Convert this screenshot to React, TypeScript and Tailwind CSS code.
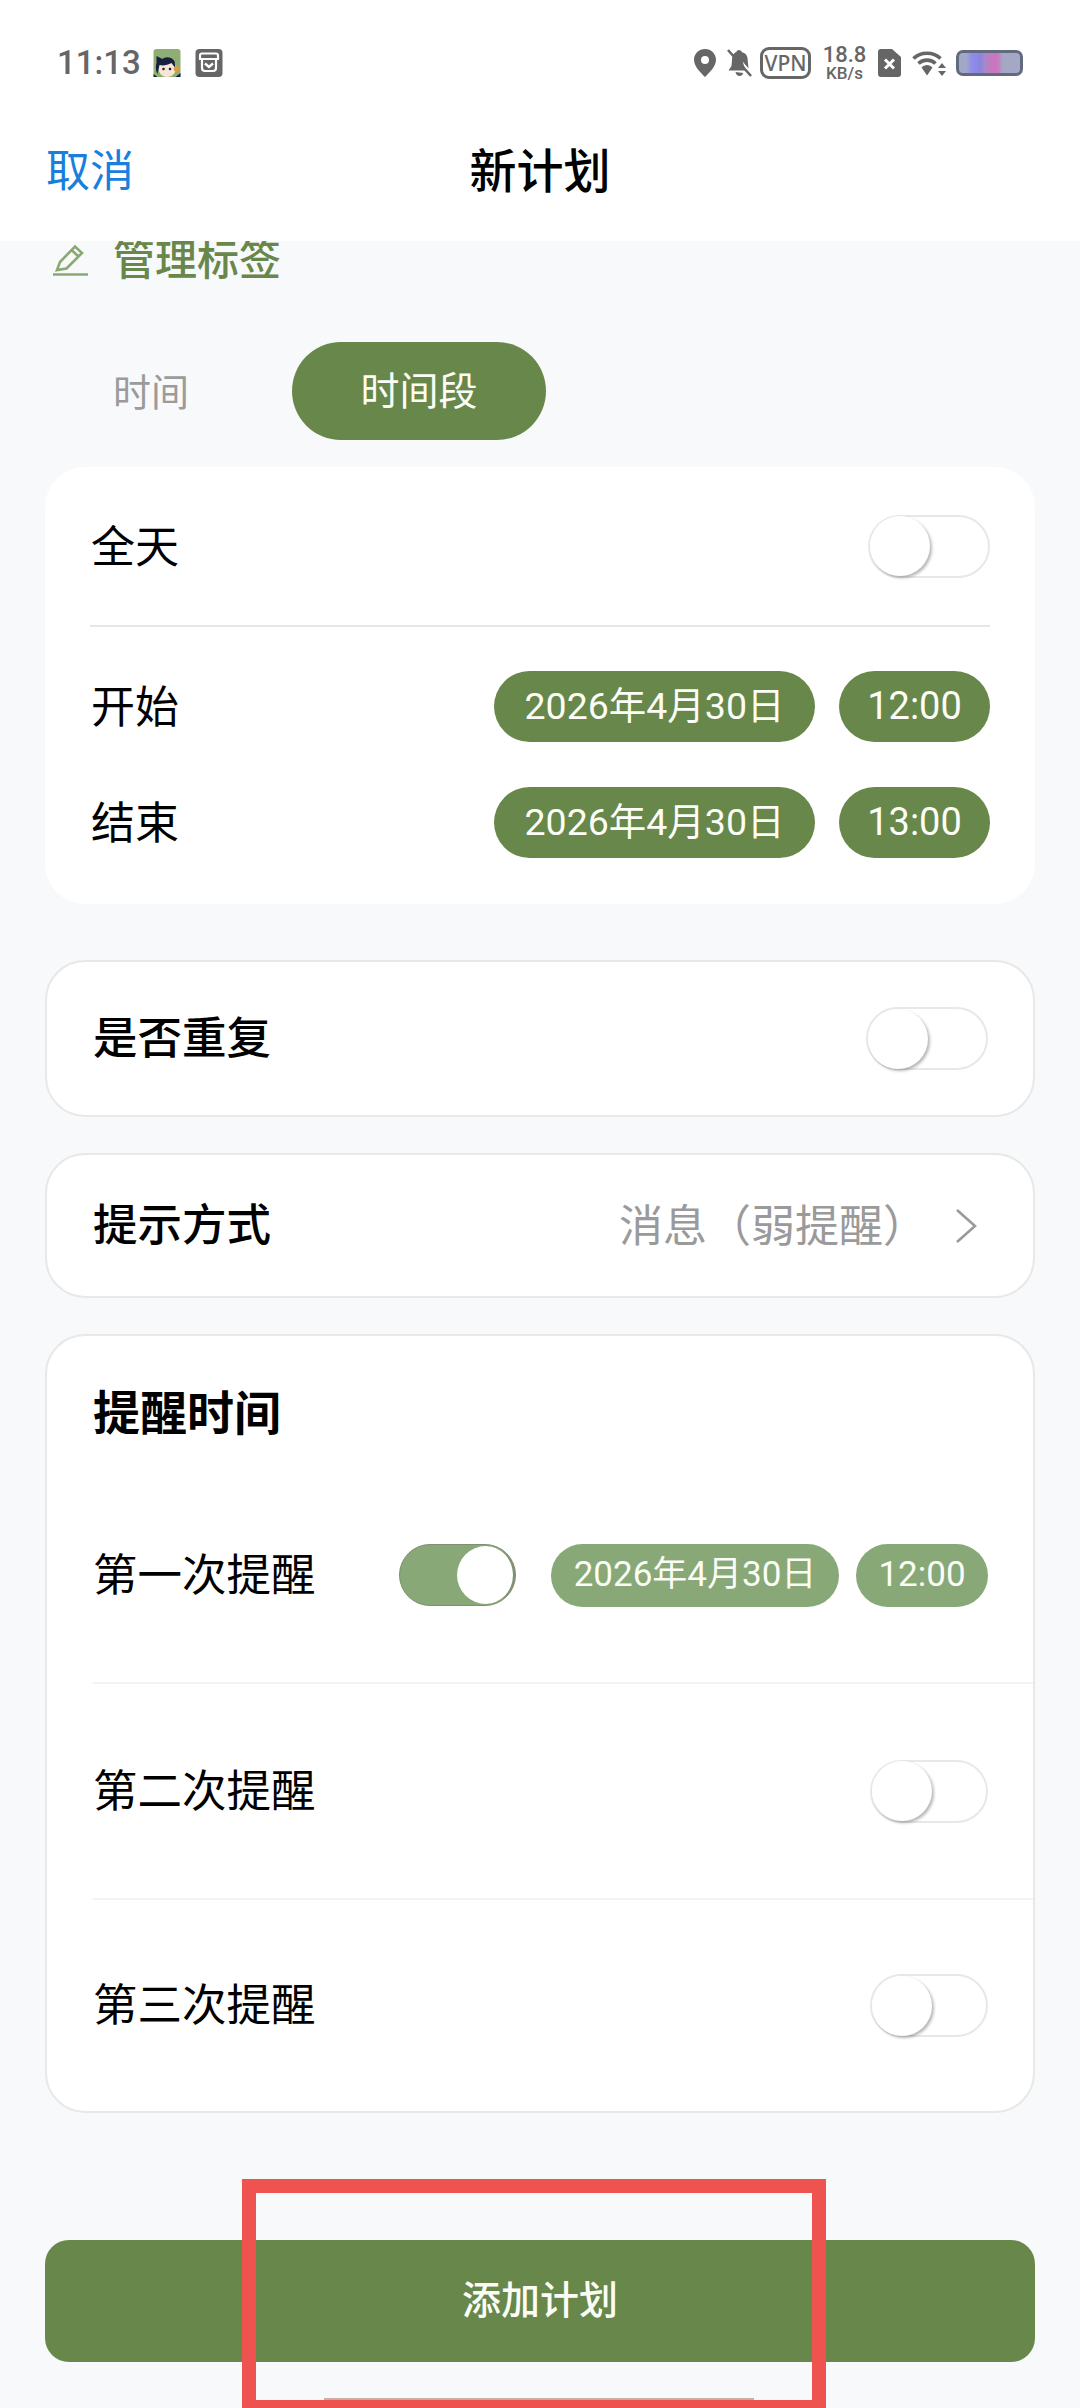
const FONT = 'font-["Roboto","Noto_Sans_CJK_SC",sans-serif]';

function Toggle({ on = false, small = false }: { on?: boolean; small?: boolean }) {
  if (on) {
    return (
      <div className="flex justify-end items-center w-[117px] h-[62px] rounded-full bg-[#88a877] border border-[#7f8f72]">
        <div className="w-[58px] h-[58px] rounded-full bg-white border-r-2 border-[#7f8f72]" />
      </div>
    );
  }
  return (
    <div className={`flex items-center h-[63px] rounded-full bg-white border-2 border-[#e8e8e8] ${small ? 'w-[118px]' : 'w-[122px]'}`}>
      <div className="w-[60px] h-[60px] rounded-full bg-white shadow-[2px_2px_3px_rgba(0,0,0,0.28)]" />
    </div>
  );
}

function Pill({ children, light = false, w, text }: { children: string; light?: boolean; w: string; text?: string }) {
  return (
    <div className={`flex items-center justify-center rounded-full text-[#fbfdf6] ${light ? 'bg-[#88a877] h-[63px] text-[35px]' : `bg-[#68874a] h-[71px] ${text ?? 'text-[37.5px]'}`} ${w}`}>
      {children}
    </div>
  );
}

function StatusIcons() {
  return (
    <div className="flex items-center text-[#666666]">
      {/* location */}
      <svg width="22" height="28" viewBox="0 0 22 28">
        <path fill="#666" fillRule="evenodd" d="M11 0C5 0 0 4.700 0 10.700 0 17.500 7 24 11 28c4-4 11-10.500 11-17.300C22 4.700 17 0 11 0zm0 7a4 4 0 1 1 0 8 4 4 0 0 1 0-8z" />
      </svg>
      {/* muted bell */}
      <svg className="ml-[11px]" width="25" height="28" viewBox="0 0 25 28">
        <path fill="#666" d="M12 1c-1.500 0-2.400 1-2.600 2.300C6.800 4 5.500 6 5.200 8.500L4.500 17 1.500 21.500H18.500ZM8.500 23c.5 2.500 2 4 4 4s3.200-1.200 3.800-3zM8 3.500 21.500 19.500 20.500 9c-.4-3-2.300-5-5.500-5.700C14.700 2 13.500 1 12 1Z" />
        <path stroke="#666" strokeWidth="2.600" d="M1 1 24 27" />
      </svg>
      <div className="ml-[8px] flex items-center justify-center w-[51px] h-[32px] rounded-[9px] border-[3px] border-[#666] text-[21px] leading-none font-medium font-['Noto_Sans']">VPN</div>
      <div className="ml-[12px] w-[43px] flex flex-col items-center leading-none font-medium">
        <span className="text-[22px] leading-[20px]">18.8</span>
        <span className="text-[17px] leading-[15px] mt-[1px]">KB/s</span>
      </div>
      {/* sim with x */}
      <svg className="ml-[12px]" width="23" height="28" viewBox="0 0 23 28">
        <path fill="#666" d="M3 0H14L23 8V25a3 3 0 0 1-3 3H3a3 3 0 0 1-3-3V3a3 3 0 0 1 3-3z" />
        <path stroke="#fff" strokeWidth="3" d="M7 10.500 16 19.500M16 10.500 7 19.500" />
      </svg>
      {/* wifi */}
      <svg className="ml-[11px]" width="34" height="28" viewBox="0 0 34 28">
        <path fill="none" stroke="#666" strokeWidth="3.600" d="M1.500 9.500C8.500 2.500 21.500 2.500 28.500 9.500M6.500 14.500C11 10 19 10 23.500 14.500" />
        <path fill="#666" d="M9.500 19.500C12.500 16 17.500 16 20.500 19.500L15 27.500Z" transform="translate(0 -1)" />
        <path fill="#666" d="M30 14 34 19H26ZM26 22H34L30 27Z" />
      </svg>
      {/* battery */}
      <div className="ml-[10px] w-[67px] h-[26px] rounded-[7px] border-[3px] border-[#626a80] bg-[linear-gradient(90deg,#a3a8c8_0%,#a3a8c8_12%,#8f8fe8_20%,#8a84e0_35%,#a888c8_42%,#cc74bc_58%,#c47cc0_64%,#a4a8c4_72%,#a4a8c4_100%)]" />
    </div>
  );
}

export default function App() {
  return (
    <div className={`relative w-[1080px] h-[2408px] overflow-hidden bg-[#f8f9fb] text-black ${FONT}`}>
      {/* 상단 헤더 */}
      <div className="relative z-10 h-[241px] bg-white">
        <div className="flex items-center justify-between h-[126px] pl-[57px] pr-[57px]">
          <div className="flex items-center">
            <span className="text-[33px] font-medium text-[#666666] w-[96px]">11:13</span>
            <svg width="28" height="28" viewBox="0 0 27 28">
              <rect width="27" height="28" rx="3" fill="#8fae74" />
              <path fill="#f8e6d4" d="M5 19c0-5 4-8 8.500-8s9 3 9 8-4 9-9 9-8.500-4-8.500-9z" />
              <path fill="#17203f" d="M3 7l6 3c2-2 8-3 12 2l1 7c-2-2-3-4-4-5-4 2-8 3-12 2l-2 9c-2-3-2-8-1-11z" />
              <circle cx="10" cy="20" r="1.300" fill="#17203f" />
              <circle cx="16.500" cy="20" r="1.300" fill="#17203f" />
              <circle cx="23" cy="20" r="2.800" fill="#e09a3a" />
              <path fill="#17203f" d="M0 25l4 3H0zM27 24v4h-5z" />
            </svg>
            <svg className="ml-[14px]" width="28" height="28" viewBox="0 0 27 28">
              <rect width="27" height="28" rx="4" fill="#666" />
              <path fill="none" stroke="#fff" strokeWidth="2.200" d="M4.500 10V6.500q0-2 2-2h14q2 0 2 2V10M3.500 10h20M6.500 10v9q0 3 3 3h8q3 0 3-3v-9" />
              <path fill="none" stroke="#fff" strokeWidth="2.400" d="M9.500 14.500l4 3.500 4-3.500" />
            </svg>
          </div>
          <StatusIcons />
        </div>
        <div className="grid grid-cols-3 items-center h-[92px] px-[46px]">
          <span className="text-[44px] text-[#1a7fdc]">取消</span>
          <span className="text-center text-[47px] font-medium">新计划</span>
        </div>
      </div>

      <div className="px-[45px]">
        {/* 태그 관리 */}
        <div className="flex items-center -mt-[5px] h-[48px] pl-[8px]">
          <svg width="35" height="32" viewBox="0 0 35 32" fill="none" stroke="#8aa873" strokeWidth="2.600">
            <path d="M4 26 7 18 22 2.500 29 9 13.500 24.500Z" />
            <path d="M18.500 6 25.500 12.500" />
            <path d="M0 30.500H35" />
          </svg>
          <span className="ml-[25px] text-[42px] font-medium text-[#68874a]">管理标签</span>
        </div>

        {/* 시간 탭 */}
        <div className="flex mt-[58px]">
          <div className="flex items-center justify-center w-[212px] h-[98px] pt-[5px] text-[38px] text-[#9b9b9b]">时间</div>
          <div className="ml-[35px] flex items-center justify-center w-[254px] h-[98px] pt-[3px] rounded-full bg-[#68874a] text-[39px] text-[#fbfdf6]">时间段</div>
        </div>

        {/* 시간 카드 */}
        <div className="mt-[27px] bg-white rounded-[40px] h-[437px]">
          <div className="flex items-center justify-between h-[158px] pl-[46px] pr-[45px] text-[44px]">
            <span className="pt-[3px]">全天</span>
            <Toggle />
          </div>
          <div className="h-[2px] mx-[45px] bg-[#e6e6e6]" />
          <div className="flex flex-col gap-[45px] pt-[44px] pl-[46px] pr-[45px] text-[44px]">
            <div className="flex items-center justify-between">
              <span className="pt-[2px]">开始</span>
              <div className="flex gap-[24px]">
                <Pill w="w-[321px]">2026年4月30日</Pill>
                <Pill w="w-[151px]" text="text-[38px]">12:00</Pill>
              </div>
            </div>
            <div className="flex items-center justify-between">
              <span className="pt-[2px]">结束</span>
              <div className="flex gap-[24px]">
                <Pill w="w-[321px]">2026年4月30日</Pill>
                <Pill w="w-[151px]" text="text-[38px]">13:00</Pill>
              </div>
            </div>
          </div>
        </div>

        {/* 반복 */}
        <div className="mt-[56px] flex items-center justify-between h-[157px] pl-[46px] pr-[45px] bg-white border-2 border-[#e8e8e8] rounded-[40px]">
          <span className="pt-[2px] text-[44.5px] font-medium">是否重复</span>
          <Toggle />
        </div>

        {/* 알림 방식 */}
        <div className="mt-[36px] flex items-center justify-between h-[145px] pl-[46px] pr-[56px] bg-white border-2 border-[#e8e8e8] rounded-[40px]">
          <span className="pt-[2px] text-[44.5px] font-medium">提示方式</span>
          <div className="flex items-center">
            <span className="pt-[2px] text-[44px] text-[#9a9a9a]">消息（弱提醒）</span>
            <svg className="ml-[28px]" width="22" height="34" viewBox="0 0 22 34" fill="none" stroke="#9a9a9a" strokeWidth="2.600">
              <path d="M2 1 20 17 2 33" />
            </svg>
          </div>
        </div>

        {/* 알림 시간 */}
        <div className="mt-[36px] h-[779px] bg-white border-2 border-[#e8e8e8] rounded-[40px]">
          <div className="flex items-center h-[132px] pl-[46px] pt-[24px]">
            <span className="text-[47px] font-bold">提醒时间</span>
          </div>
          <div className="flex items-center justify-between h-[216px] ml-[46px] pr-[45px] border-b-2 border-[#f2f2f2]">
            <span className="pt-[2px] text-[44.5px]">第一次提醒</span>
            <div className="flex items-center">
              <Toggle on />
              <div className="ml-[35px] flex gap-[17px]">
                <Pill light w="w-[288px]">2026年4月30日</Pill>
                <Pill light w="w-[132px]">12:00</Pill>
              </div>
            </div>
          </div>
          <div className="flex items-center justify-between h-[216px] ml-[46px] pr-[45px] border-b-2 border-[#f2f2f2]">
            <span className="pt-[2px] text-[44.5px]">第二次提醒</span>
            <Toggle small />
          </div>
          <div className="flex items-center justify-between h-[211px] ml-[46px] pr-[45px]">
            <span className="pt-[2px] text-[44.5px]">第三次提醒</span>
            <Toggle small />
          </div>
        </div>

        {/* 추가 버튼 */}
        <div className="mt-[127px] flex items-center justify-center h-[122px] rounded-[24px] bg-[#68874a] text-[39px] font-medium text-[#fbfdf6]">
          添加计划
        </div>
      </div>

      {/* 홈 인디케이터 + 빨간 강조 상자 */}
      <div className="absolute left-[324px] top-[2398px] w-[430px] h-[3px] bg-[#c9b0a5]" />
      <div className="absolute left-[242px] top-[2179px] w-[584px] h-[229px] border-[14px] border-b-[8px] border-[#ef5350]" />
    </div>
  );
}
